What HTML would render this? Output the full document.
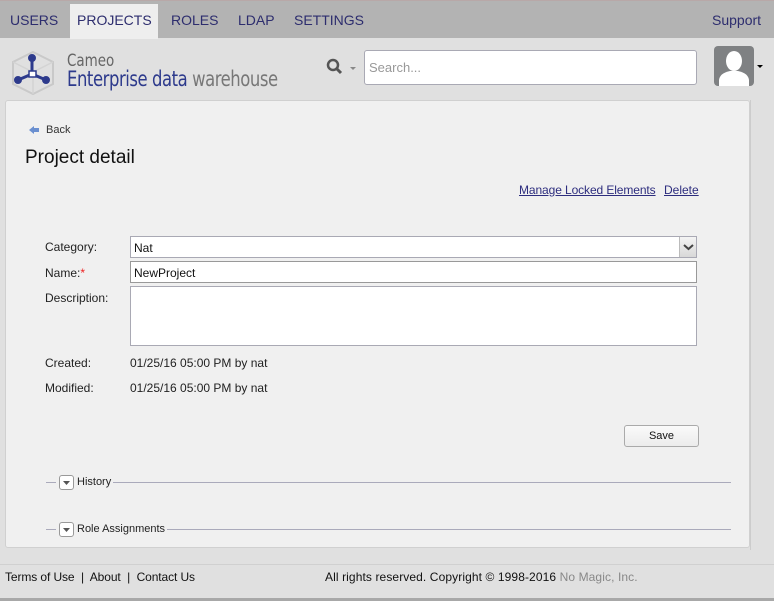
<!DOCTYPE html>
<html><head><meta charset="utf-8"><style>
*{margin:0;padding:0;box-sizing:border-box}
body{width:774px;height:601px;overflow:hidden;background:#e0e0e0;font-family:"Liberation Sans",sans-serif;position:relative;color:#111}
.abs{position:absolute}
#nav{left:0;top:0;width:774px;height:38px;background:#b3b3b3;border-top:1px solid #b8a8a8}
#nav span{position:absolute;top:11px;font-size:14px;color:#2d2d6e}
#act{left:70px;top:3px;width:88px;height:35px;background:#eeeeee}
#panel{left:5px;top:100px;width:745px;height:448px;background:#f0f0f0;border:1px solid #d0d0d0;border-radius:3px}
.lbl{font-size:12px;color:#222}
.inp{background:#fff;border:1px solid #a9a9b4;}
a{color:#2d2d7e}
</style></head><body>
<div id="nav" class="abs">
<div id="act" class="abs"></div>
<span style="left:10px">USERS</span>
<span style="left:77px">PROJECTS</span>
<span style="left:171px">ROLES</span>
<span style="left:238px">LDAP</span>
<span style="left:294px">SETTINGS</span>
<span style="left:712px">Support</span>
</div>
<svg class="abs" style="left:10px;top:50px" width="46" height="46" viewBox="0 0 46 46">
<path d="M23 2 L43 12 L43 34 L23 44 L3 34 L3 12 Z" fill="none" stroke="#c9c9c9" stroke-width="2"/>
<path d="M3 12 L23 22 L43 12 M23 22 L23 44" fill="none" stroke="#d3d3d3" stroke-width="1.5"/>
<g stroke="#2d3a8c" stroke-width="3" fill="#2d3a8c"><line x1="22" y1="8" x2="22" y2="24"/><line x1="22" y1="24" x2="8" y2="30"/><line x1="22" y1="24" x2="36" y2="30"/>
<circle cx="22" cy="8" r="2.5"/><circle cx="8" cy="30" r="2.5"/><circle cx="36" cy="30" r="2.5"/></g>
<rect x="19" y="21" width="7" height="6" fill="#fff" stroke="#2d3a8c" stroke-width="1.5"/>
</svg>
<div class="abs" style="left:67px;top:51px;font-size:17px;color:#666;font-family:'DejaVu Sans Condensed',sans-serif;transform:scaleX(0.88);transform-origin:0 0">Cameo</div>
<div class="abs" style="left:67px;top:67px;font-size:21px;color:#2d3a8c;font-family:'DejaVu Sans Condensed',sans-serif;letter-spacing:-0.5px;white-space:nowrap;transform:scaleX(0.87);transform-origin:0 0">Enterprise data <span style="color:#777">warehouse</span></div>
<svg class="abs" style="left:326px;top:58px" width="30" height="18"><circle cx="7" cy="7" r="5" fill="none" stroke="#555" stroke-width="2.5"/><line x1="11" y1="11" x2="15" y2="15" stroke="#555" stroke-width="3"/><path d="M24 9 L30 9 L27 12Z" fill="#888"/></svg>
<div class="abs inp" style="left:364px;top:50px;width:333px;height:35px;border-radius:3px;font-size:13px;color:#999;padding:9px 4px">Search...</div>
<div class="abs" style="left:714px;top:46px;width:40px;height:40px;background:#7f8183;border-radius:4px;overflow:hidden">
<svg width="40" height="40"><ellipse cx="20" cy="15" rx="8" ry="10" fill="#fff"/><path d="M5 40 L5 34 Q6 27 16 25 L24 25 Q34 27 35 34 L35 40Z" fill="#fff"/></svg></div>
<div class="abs" style="left:757px;top:65px;width:0;height:0;border-left:3px solid transparent;border-right:3px solid transparent;border-top:3px solid #000"></div>
<div id="panel" class="abs"></div>
<div class="abs" style="left:750px;top:100px;width:1px;height:450px;background:#ccc"></div>
<svg class="abs" style="left:28px;top:125px" width="12" height="10"><path d="M1 5 L6 1 L6 3 L11 3 L11 7 L6 7 L6 9Z" fill="#6a8fd0"/></svg>
<div class="abs" style="left:46px;top:124px;font-size:11px;color:#333">Back</div>
<div class="abs" style="left:25px;top:147px;font-size:19px;color:#111">Project detail</div>
<div class="abs" style="left:519px;top:183px;font-size:12px;letter-spacing:-0.1px"><a style="text-decoration:underline">Manage Locked Elements</a></div>
<div class="abs" style="left:664px;top:183px;font-size:12px"><a style="text-decoration:underline">Delete</a></div>
<div class="abs lbl" style="left:45px;top:240px">Category:</div>
<div class="abs lbl" style="left:45px;top:266px">Name:<span style="color:#e22">*</span></div>
<div class="abs lbl" style="left:45px;top:291px">Description:</div>
<div class="abs lbl" style="left:45px;top:356px">Created:</div>
<div class="abs lbl" style="left:45px;top:381px">Modified:</div>
<div class="abs lbl" style="left:130px;top:356px">01/25/16 05:00 PM by nat</div>
<div class="abs lbl" style="left:130px;top:381px">01/25/16 05:00 PM by nat</div>
<div class="abs inp" style="left:130px;top:236px;width:567px;height:22px;font-size:12px;padding:4px 3px">Nat</div>
<div class="abs" style="left:679px;top:237px;width:17px;height:20px;background:linear-gradient(#f4f4f4,#d8d8d8);border-left:1px solid #bbb"><svg width="17" height="20"><path d="M4 8 L8.5 12 L13 8" fill="none" stroke="#444" stroke-width="2"/></svg></div>
<div class="abs inp" style="left:130px;top:261px;width:567px;height:22px;font-size:12px;padding:4px 3px;border-color:#999">NewProject</div>
<div class="abs inp" style="left:130px;top:286px;width:567px;height:60px"></div>
<div class="abs" style="left:624px;top:425px;width:75px;height:22px;border:1px solid #aaa;border-radius:3px;background:linear-gradient(#fafafa,#ececec);font-size:11px;text-align:center;line-height:20px">Save</div>
<div class="abs" style="left:46px;top:482px;width:10px;height:1px;background:#aab"></div>
<div class="abs" style="left:113px;top:482px;width:618px;height:1px;background:#aab"></div>
<div class="abs" style="left:59px;top:475px;width:15px;height:15px;border:1px solid #999;border-radius:3px;background:#fff"><svg width="13" height="13"><path d="M3 5 L10 5 L6.5 9Z" fill="#555"/></svg></div>
<div class="abs" style="left:77px;top:476px;font-size:11px;color:#222">History</div>
<div class="abs" style="left:46px;top:529px;width:10px;height:1px;background:#aab"></div>
<div class="abs" style="left:167px;top:529px;width:564px;height:1px;background:#aab"></div>
<div class="abs" style="left:59px;top:522px;width:15px;height:15px;border:1px solid #999;border-radius:3px;background:#fff"><svg width="13" height="13"><path d="M3 5 L10 5 L6.5 9Z" fill="#555"/></svg></div>
<div class="abs" style="left:77px;top:523px;font-size:11px;color:#222">Role Assignments</div>
<div class="abs" style="left:0;top:564px;width:774px;height:1px;background:#d0d0d0"></div>
<div class="abs" style="left:5px;top:570px;font-size:12px;color:#111;letter-spacing:-0.1px">Terms of Use &nbsp;|&nbsp; About &nbsp;|&nbsp; Contact Us</div>
<div class="abs" style="left:325px;top:570px;font-size:12px;color:#111;letter-spacing:0.1px">All rights reserved. Copyright © 1998-2016 <span style="color:#888">No Magic, Inc.</span></div>
<div class="abs" style="left:0;top:598px;width:774px;height:3px;background:#a8a8a8"></div>
</body></html>
